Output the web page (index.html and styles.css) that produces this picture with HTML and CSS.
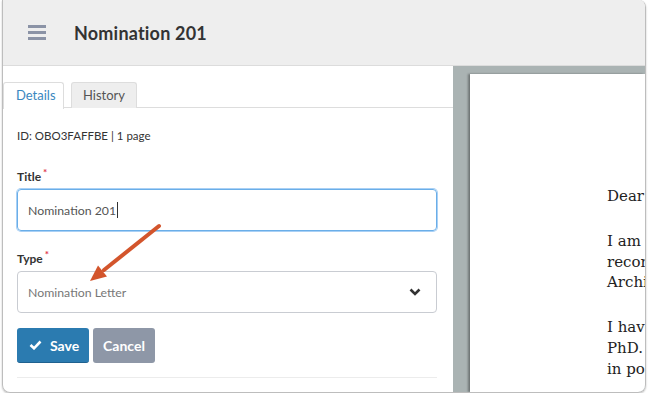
FILE: index.html
```html
<!DOCTYPE html>
<html>
<head lang="en">
    <meta charset="UTF-8">
    <title>Nomination 201</title>
    <link rel="stylesheet" href="styles.css">
</head>
<body>
<div class="window">
    <div class="header">
        <span class="burger"><i></i><i></i><i></i></span>
        <h1>Nomination 201</h1>
    </div>
    <div class="main">
        <div class="side">
            <ul class="tabs">
                <li class="tab active">Details</li>
                <li class="tab">History</li>
            </ul>
            <div class="form">
                <div class="meta">ID: OBO3FAFFBE | 1 page</div>
                <label class="label">Title<span class="req">*</span></label>
                <div class="input focus">Nomination 201<span class="caret"></span></div>
                <label class="label">Type<span class="req">*</span></label>
                <div class="input select">
                    <span class="placeholder">Nomination Letter</span>
                    <svg class="chev" width="12" height="8" viewBox="0 0 12 8"><polyline points="1.5,1.5 6,6 10.5,1.5" fill="none" stroke="#333" stroke-width="2.6"/></svg>
                </div>
                <div class="actions">
                    <button class="btn save"><svg width="13" height="10" viewBox="0 0 13 10"><polyline points="1.5,5 5,8.3 11.5,1.5" fill="none" stroke="#fff" stroke-width="2.6"/></svg>Save</button>
                    <button class="btn cancel">Cancel</button>
                </div>
                <div class="rule"></div>
            </div>
        </div>
        <div class="viewer">
            <div class="page">
                <p>Dear</p>
                <p>I am writing to<br>recommend the<br>Archives award.</p>
                <p>I have known her<br>PhD. studies and<br>in positions held.</p>
            </div>
        </div>
    </div>
    <svg class="arrow" width="100" height="80" viewBox="0 0 100 80">
        <line x1="76" y1="10" x2="21" y2="54" stroke="#d3552c" stroke-width="4" stroke-linecap="round"/>
        <polygon points="7,65 24,60.5 15,49.5" fill="#d3552c"/>
    </svg>
</div>
</body>
</html>
```
FILE: styles.css
```css
* {
    margin: 0;
    padding: 0;
    box-sizing: border-box;
}
body {
    background: #fff;
    font-family: Lato, "Liberation Sans", sans-serif;
    color: #333;
}
.window {
    position: relative;
    margin-left: 2px;
    width: 644px;
    height: 393px;
    border: 1px solid #bdbdbd;
    border-top: 0;
    border-radius: 0 7px 8px 8px;
    overflow: hidden;
    display: flex;
    flex-direction: column;
    box-shadow: 0 1px 2px rgba(0, 0, 0, 0.25);
}
.header {
    height: 66px;
    flex: none;
    background: #eeeeee;
    border-bottom: 1px solid #dcdcdc;
    display: flex;
    align-items: center;
    padding-left: 25px;
}
.burger {
    display: flex;
    flex-direction: column;
    gap: 3px;
    width: 18px;
    margin-right: 28px;
}
.burger i {
    display: block;
    height: 3px;
    background: #8b93a6;
}
.header h1 {
    font-size: 18px;
    font-weight: 700;
    color: #333;
    letter-spacing: 0.2px;
}
.main {
    flex: 1;
    display: flex;
    min-height: 0;
}
.side {
    width: 450px;
    flex: none;
    padding-top: 16px;
}
.tabs {
    list-style: none;
    display: flex;
    gap: 7px;
    border-bottom: 1px solid #ddd;
    height: 26px;
}
.tab {
    height: 26px;
    padding: 0 11px;
    font-size: 13px;
    line-height: 25px;
    color: #555;
    background: #eee;
    border: 1px solid #ddd;
    border-bottom: 0;
    border-radius: 3px 3px 0 0;
}
.tab.active {
    height: 27px;
    color: #3a87c0;
    background: #fff;
    width: 61px;
    padding: 0 12px;
}
.form {
    padding: 21px 16px 0 14px;
}
.meta {
    font-size: 11.5px;
    line-height: 14px;
    margin-bottom: 22px;
}
.label {
    display: block;
    font-size: 12px;
    font-weight: 700;
    line-height: 14px;
    margin-bottom: 5px;
}
.req {
    color: #e0344b;
    font-size: 10px;
    vertical-align: 5px;
    margin-left: 2px;
}
.input {
    height: 42px;
    border: 1px solid #c9ccd2;
    border-radius: 4px;
    display: flex;
    align-items: center;
    padding: 0 10px;
    font-size: 12.3px;
    color: #555;
}
.input.focus {
    border-color: #6aaee8;
    box-shadow: 0 0 0 1px #a9d0f5;
    margin-bottom: 16px;
}
.caret {
    display: inline-block;
    width: 1px;
    height: 16px;
    background: #333;
    margin-left: 1px;
}
.select {
    justify-content: space-between;
    margin-bottom: 15px;
}
.placeholder {
    color: #777;
}
.chev {
    margin-right: 5px;
}
.actions {
    display: flex;
    gap: 4px;
}
.btn {
    height: 35px;
    border: 0;
    border-radius: 3px;
    font-family: Lato, "Liberation Sans", sans-serif;
    font-size: 14px;
    font-weight: 700;
    color: #fff;
    display: flex;
    align-items: center;
    gap: 8px;
}
.save {
    width: 72px;
    padding-left: 12px;
    background: #2b7bb0;
    border-bottom: 1px solid #1f618f;
}
.cancel {
    width: 62px;
    justify-content: center;
    background: #8e97a7;
}
.rule {
    margin-top: 14px;
    height: 1px;
    background: #ececec;
}
.viewer {
    flex: 1;
    background: #aab3b3;
    padding: 8px 0 0 17px;
    overflow: hidden;
}
.page {
    height: 100%;
    background: #fff;
    box-shadow: -2px 0 2px rgba(0, 0, 0, 0.35);
    padding: 112px 0 0 137px;
    font-family: "DejaVu Serif", serif;
    font-size: 15px;
    line-height: 20.8px;
    color: #222;
    white-space: nowrap;
    overflow: hidden;
}
.page p {
    margin-bottom: 24px;
}
.arrow {
    position: absolute;
    left: 80px;
    top: 216px;
}
```
